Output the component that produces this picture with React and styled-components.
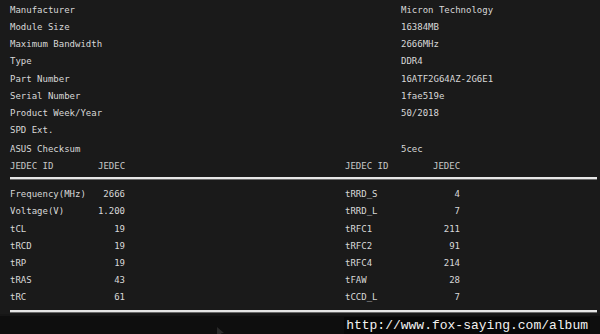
import React from 'react';
import styled, { createGlobalStyle } from 'styled-components';

const info = [
  ['Manufacturer', 'Micron Technology'],
  ['Module Size', '16384MB'],
  ['Maximum Bandwidth', '2666MHz'],
  ['Type', 'DDR4'],
  ['Part Number', '16ATF2G64AZ-2G6E1'],
  ['Serial Number', '1fae519e'],
  ['Product Week/Year', '50/2018'],
  ['SPD Ext.', ''],
  ['ASUS Checksum', '5cec'],
];

const leftTimings = [
  ['Frequency(MHz)', '2666'],
  ['Voltage(V)', '1.200'],
  ['tCL', '19'],
  ['tRCD', '19'],
  ['tRP', '19'],
  ['tRAS', '43'],
  ['tRC', '61'],
];

const rightTimings = [
  ['tRRD_S', '4'],
  ['tRRD_L', '7'],
  ['tRFC1', '211'],
  ['tRFC2', '91'],
  ['tRFC4', '214'],
  ['tFAW', '28'],
  ['tCCD_L', '7'],
];

export default function App() {
  return (
    <>
      <GlobalStyle />
      <Page>
        <InfoList>
          {info.map(([label, value], i) => (
            <InfoRow key={label} $extra={i === info.length - 1}>
              <span>{label}</span>
              <span>{value}</span>
            </InfoRow>
          ))}
        </InfoList>

        <Tables>
          <TableHead>
            <HeadCell>
              <span>JEDEC ID</span>
              <span>JEDEC</span>
            </HeadCell>
            <HeadCell>
              <span>JEDEC ID</span>
              <span>JEDEC</span>
            </HeadCell>
          </TableHead>
          <Rule $top={2} $bottom={7} />
          <TableBody>
            <Column>
              {leftTimings.map(([k, v]) => (
                <TimingRow key={k}>
                  <span>{k}</span>
                  <Value>{v}</Value>
                </TimingRow>
              ))}
            </Column>
            <Column>
              {rightTimings.map(([k, v]) => (
                <TimingRow key={k}>
                  <span>{k}</span>
                  <Value>{v}</Value>
                </TimingRow>
              ))}
            </Column>
          </TableBody>
          <Rule $top={4} $bottom={0} />
        </Tables>

        <Footer>
          <Cursor width="8" height="10" viewBox="0 0 8 10">
            <path d="M0 0 L0 9 L2.5 6.8 L4.2 10 L5.6 9.3 L4 6.2 L7 6 Z" fill="#2a2a2a" />
          </Cursor>
          <Watermark>http://www.fox-saying.com/album</Watermark>
        </Footer>
      </Page>
    </>
  );
}

const GlobalStyle = createGlobalStyle`
  html, body {
    margin: 0;
    padding: 0;
    background: #1a1a1a;
  }
`;

const Page = styled.div`
  width: 600px;
  height: 334px;
  background: #1a1a1a;
  color: #d8d8d8;
  font-family: 'DejaVu Sans Mono', 'Liberation Mono', monospace;
  font-size: 9px;
  display: flex;
  flex-direction: column;
  overflow: hidden;
`;

const InfoList = styled.div`
  display: flex;
  flex-direction: column;
  padding: 2px 0 0 10px;
`;

const InfoRow = styled.div`
  display: grid;
  grid-template-columns: 391px 1fr;
  height: 17.15px;
  line-height: 17.15px;
  margin-top: ${p => (p.$extra ? '2px' : '0')};
  white-space: pre;
`;

const Tables = styled.div`
  display: flex;
  flex-direction: column;
  padding: 0 3px 0 10px;
`;

const TableHead = styled.div`
  display: flex;
  gap: 220px;
  height: 17px;
  line-height: 17px;
  color: #c8c8c8;
`;

const HeadCell = styled.div`
  display: grid;
  grid-template-columns: 88px 27px;
`;

const Rule = styled.div`
  height: 2px;
  margin: ${p => p.$top}px 0 ${p => p.$bottom}px;
  background: #e6e6e6;
  box-shadow: 0 1px 0 #6a6a6a;
`;

const TableBody = styled.div`
  display: flex;
  gap: 220px;
`;

const Column = styled.div`
  display: flex;
  flex-direction: column;
`;

const TimingRow = styled.div`
  display: grid;
  grid-template-columns: 80px 35px;
  height: 17.15px;
  line-height: 17.15px;
`;

const Value = styled.span`
  text-align: right;
`;

const Footer = styled.div`
  position: relative;
  flex: 1;
  margin-top: 2px;
  background: #0e0e0e;
  border-top: 2px solid #161616;
  display: flex;
  justify-content: flex-end;
  align-items: center;
  padding-right: 10px;
`;

const Watermark = styled.span`
  font-family: 'Liberation Mono', 'Courier New', monospace;
  font-size: 13px;
  color: #f2f2f2;
  background: #080808;
  padding: 1px 2px;
`;

const Cursor = styled.svg`
  position: absolute;
  left: 217px;
  top: 11px;
`;
